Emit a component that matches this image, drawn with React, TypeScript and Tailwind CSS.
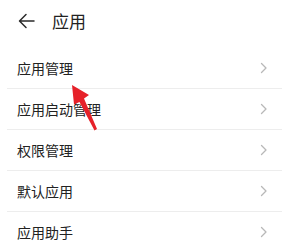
import React from "react";

const items = ["应用管理", "应用启动管理", "权限管理", "默认应用", "应用助手"];

function Chevron() {
  return (
    <svg width="8" height="12" viewBox="0 0 8 12" fill="none">
      <polyline points="1.5,1.5 6,6 1.5,10.5" stroke="#b8b8b8" strokeWidth="1.3" strokeLinecap="round" strokeLinejoin="round" />
    </svg>
  );
}

export default function App() {
  return (
    <div
      className="relative w-[294px] h-[251px] bg-white overflow-hidden text-[#222]"
      style={{ fontFamily: '"Noto Sans CJK SC", "Noto Sans", sans-serif' }}
    >
      <div className="h-[48px] flex items-start pt-[10px] pl-[18px] gap-[17px]">
        <svg width="17" height="22" viewBox="0 0 17 22" fill="none">
          <path d="M16 11H2M8 4.5L1.5 11L8 17.5" stroke="#2a2a2a" strokeWidth="1.5" strokeLinecap="round" strokeLinejoin="round" />
        </svg>
        <span className="text-[17px] leading-[22px]">应用</span>
      </div>

      <div>
        {items.map((t) => (
          <div key={t} className="h-[41px] mx-[7px] w-[275px] border-b border-[#ededed] flex items-center justify-between pl-[10px] pr-[14px]">
            <span className="text-[14px] leading-none">{t}</span>
            <Chevron />
          </div>
        ))}
      </div>

      <svg className="absolute left-0 top-0 pointer-events-none" width="294" height="251" viewBox="0 0 294 251">
        <path d="M72 85 L89 95 L84 98.5 L97 129 L94.5 130.5 L79.5 102 L74 104.5 Z" fill="#e62129" />
      </svg>
    </div>
  );
}
